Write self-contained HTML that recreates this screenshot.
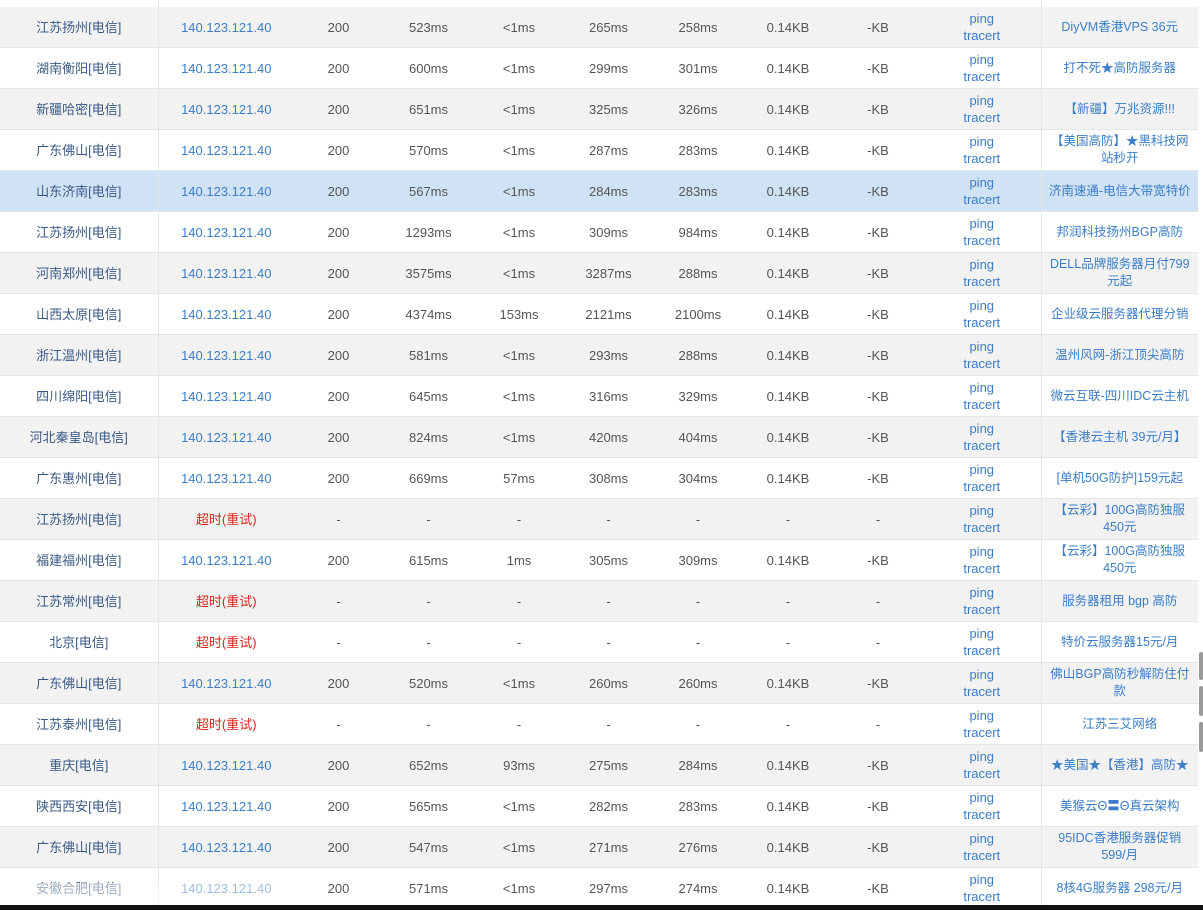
<!DOCTYPE html>
<html><head><meta charset="utf-8"><style>
body{margin:0;background:#fff;width:1203px;height:910px;overflow:hidden;position:relative;font-family:"Liberation Sans","Noto Sans CJK SC",sans-serif;font-size:13px;color:#555}
table{position:absolute;left:0;top:7px;border-collapse:collapse;table-layout:fixed;width:1198px}
td{height:40px;border-bottom:1px solid #e6e6e6;text-align:center;padding:0;line-height:17px;vertical-align:middle}
tr:nth-child(odd){background:#f2f2f2}
tr.hl{background:#cfe2f6}
td:first-child{border-right:1px solid #e6e6e6;color:#3a5a86}
td:nth-child(10){border-right:1px solid #e6e6e6}
td:nth-child(11){font-size:12.5px}
.b{color:#3b7dc8}
.r{color:#d8261c}
.top{position:absolute;left:158px;top:0;width:1px;height:7px;background:#e6e6e6}
.top2{position:absolute;left:1041px;top:0;width:1px;height:7px;background:#e6e6e6}
.bar{position:absolute;left:0;top:905px;width:1203px;height:5px;background:#111}
.sb{position:absolute;left:1199px;width:4px;background:#999;border-radius:2px}
.ov{position:absolute;left:0;top:883px;width:287px;height:22px;background:rgba(255,255,255,.5);border-radius:0 6px 0 0}
</style></head><body>
<div class="top"></div><div class="top2"></div>
<table>
<colgroup><col style="width:158px"><col style="width:136px"><col style="width:89px"><col style="width:91px"><col style="width:90px"><col style="width:89px"><col style="width:90px"><col style="width:90px"><col style="width:90px"><col style="width:118px"><col style="width:157px"></colgroup>
<tr><td>江苏扬州[电信]</td><td class="b">140.123.121.40</td><td>200</td><td>523ms</td><td>&lt;1ms</td><td>265ms</td><td>258ms</td><td>0.14KB</td><td>-KB</td><td class="b">ping<br>tracert</td><td class="b">DiyVM香港VPS 36元</td></tr>
<tr><td>湖南衡阳[电信]</td><td class="b">140.123.121.40</td><td>200</td><td>600ms</td><td>&lt;1ms</td><td>299ms</td><td>301ms</td><td>0.14KB</td><td>-KB</td><td class="b">ping<br>tracert</td><td class="b">打不死★高防服务器</td></tr>
<tr><td>新疆哈密[电信]</td><td class="b">140.123.121.40</td><td>200</td><td>651ms</td><td>&lt;1ms</td><td>325ms</td><td>326ms</td><td>0.14KB</td><td>-KB</td><td class="b">ping<br>tracert</td><td class="b">【新疆】万兆资源!!!</td></tr>
<tr><td>广东佛山[电信]</td><td class="b">140.123.121.40</td><td>200</td><td>570ms</td><td>&lt;1ms</td><td>287ms</td><td>283ms</td><td>0.14KB</td><td>-KB</td><td class="b">ping<br>tracert</td><td class="b">【美国高防】★黑科技网<br>站秒开</td></tr>
<tr class="hl"><td>山东济南[电信]</td><td class="b">140.123.121.40</td><td>200</td><td>567ms</td><td>&lt;1ms</td><td>284ms</td><td>283ms</td><td>0.14KB</td><td>-KB</td><td class="b">ping<br>tracert</td><td class="b">济南速通-电信大带宽特价</td></tr>
<tr><td>江苏扬州[电信]</td><td class="b">140.123.121.40</td><td>200</td><td>1293ms</td><td>&lt;1ms</td><td>309ms</td><td>984ms</td><td>0.14KB</td><td>-KB</td><td class="b">ping<br>tracert</td><td class="b">邦润科技扬州BGP高防</td></tr>
<tr><td>河南郑州[电信]</td><td class="b">140.123.121.40</td><td>200</td><td>3575ms</td><td>&lt;1ms</td><td>3287ms</td><td>288ms</td><td>0.14KB</td><td>-KB</td><td class="b">ping<br>tracert</td><td class="b">DELL品牌服务器月付799<br>元起</td></tr>
<tr><td>山西太原[电信]</td><td class="b">140.123.121.40</td><td>200</td><td>4374ms</td><td>153ms</td><td>2121ms</td><td>2100ms</td><td>0.14KB</td><td>-KB</td><td class="b">ping<br>tracert</td><td class="b">企业级云服务器代理分销</td></tr>
<tr><td>浙江温州[电信]</td><td class="b">140.123.121.40</td><td>200</td><td>581ms</td><td>&lt;1ms</td><td>293ms</td><td>288ms</td><td>0.14KB</td><td>-KB</td><td class="b">ping<br>tracert</td><td class="b">温州风网-浙江顶尖高防</td></tr>
<tr><td>四川绵阳[电信]</td><td class="b">140.123.121.40</td><td>200</td><td>645ms</td><td>&lt;1ms</td><td>316ms</td><td>329ms</td><td>0.14KB</td><td>-KB</td><td class="b">ping<br>tracert</td><td class="b">微云互联-四川IDC云主机</td></tr>
<tr><td>河北秦皇岛[电信]</td><td class="b">140.123.121.40</td><td>200</td><td>824ms</td><td>&lt;1ms</td><td>420ms</td><td>404ms</td><td>0.14KB</td><td>-KB</td><td class="b">ping<br>tracert</td><td class="b">【香港云主机 39元/月】</td></tr>
<tr><td>广东惠州[电信]</td><td class="b">140.123.121.40</td><td>200</td><td>669ms</td><td>57ms</td><td>308ms</td><td>304ms</td><td>0.14KB</td><td>-KB</td><td class="b">ping<br>tracert</td><td class="b">[单机50G防护]159元起</td></tr>
<tr><td>江苏扬州[电信]</td><td class="r">超时(重试)</td><td>-</td><td>-</td><td>-</td><td>-</td><td>-</td><td>-</td><td>-</td><td class="b">ping<br>tracert</td><td class="b">【云彩】100G高防独服<br>450元</td></tr>
<tr><td>福建福州[电信]</td><td class="b">140.123.121.40</td><td>200</td><td>615ms</td><td>1ms</td><td>305ms</td><td>309ms</td><td>0.14KB</td><td>-KB</td><td class="b">ping<br>tracert</td><td class="b">【云彩】100G高防独服<br>450元</td></tr>
<tr><td>江苏常州[电信]</td><td class="r">超时(重试)</td><td>-</td><td>-</td><td>-</td><td>-</td><td>-</td><td>-</td><td>-</td><td class="b">ping<br>tracert</td><td class="b">服务器租用 bgp 高防</td></tr>
<tr><td>北京[电信]</td><td class="r">超时(重试)</td><td>-</td><td>-</td><td>-</td><td>-</td><td>-</td><td>-</td><td>-</td><td class="b">ping<br>tracert</td><td class="b">特价云服务器15元/月</td></tr>
<tr><td>广东佛山[电信]</td><td class="b">140.123.121.40</td><td>200</td><td>520ms</td><td>&lt;1ms</td><td>260ms</td><td>260ms</td><td>0.14KB</td><td>-KB</td><td class="b">ping<br>tracert</td><td class="b">佛山BGP高防秒解防住付<br>款</td></tr>
<tr><td>江苏泰州[电信]</td><td class="r">超时(重试)</td><td>-</td><td>-</td><td>-</td><td>-</td><td>-</td><td>-</td><td>-</td><td class="b">ping<br>tracert</td><td class="b">江苏三艾网络</td></tr>
<tr><td>重庆[电信]</td><td class="b">140.123.121.40</td><td>200</td><td>652ms</td><td>93ms</td><td>275ms</td><td>284ms</td><td>0.14KB</td><td>-KB</td><td class="b">ping<br>tracert</td><td class="b">★美国★【香港】高防★</td></tr>
<tr><td>陕西西安[电信]</td><td class="b">140.123.121.40</td><td>200</td><td>565ms</td><td>&lt;1ms</td><td>282ms</td><td>283ms</td><td>0.14KB</td><td>-KB</td><td class="b">ping<br>tracert</td><td class="b">美猴云Θ〓Θ真云架构</td></tr>
<tr><td>广东佛山[电信]</td><td class="b">140.123.121.40</td><td>200</td><td>547ms</td><td>&lt;1ms</td><td>271ms</td><td>276ms</td><td>0.14KB</td><td>-KB</td><td class="b">ping<br>tracert</td><td class="b">95IDC香港服务器促销<br>599/月</td></tr>
<tr><td>安徽合肥[电信]</td><td class="b">140.123.121.40</td><td>200</td><td>571ms</td><td>&lt;1ms</td><td>297ms</td><td>274ms</td><td>0.14KB</td><td>-KB</td><td class="b">ping<br>tracert</td><td class="b">8核4G服务器 298元/月</td></tr>
</table>
<div class="ov"></div>
<div class="sb" style="top:652px;height:28px"></div>
<div class="sb" style="top:686px;height:30px"></div>
<div class="sb" style="top:722px;height:30px"></div>
<div class="bar"></div>
</body></html>
